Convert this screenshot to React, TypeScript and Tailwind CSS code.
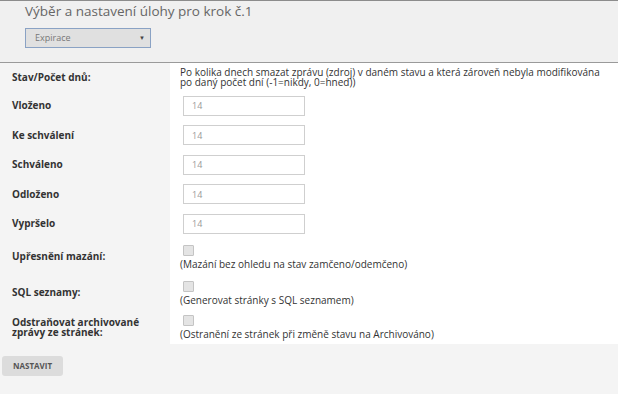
import { useState } from "react";

type Row = { label: string; value: string };

const STATES: Row[] = [
  { label: "Vloženo", value: "14" },
  { label: "Ke schválení", value: "14" },
  { label: "Schváleno", value: "14" },
  { label: "Odloženo", value: "14" },
  { label: "Vypršelo", value: "14" },
];

const OPTIONS = [
  { label: "Upřesnění mazání:", note: "(Mazání bez ohledu na stav zamčeno/odemčeno)" },
  { label: "SQL seznamy:", note: "(Generovat stránky s SQL seznamem)" },
  { label: "Odstraňovat archivované zprávy ze stránek:", note: "(Ostranění ze stránek při změně stavu na Archivováno)" },
];

export default function App() {
  const [values, setValues] = useState(STATES.map((s) => s.value));
  const [checks, setChecks] = useState(OPTIONS.map(() => false));

  return (
    <div className="w-[618px] h-[394px] bg-[#f4f4f4] font-['Open_Sans',sans-serif] text-[#333] overflow-hidden">
      <div className="h-[63px] bg-[#f0f0f0] border-t border-[#8c8c8c] border-b border-b-[#9a9a9a] pl-[25px]">
        <h1 className="text-[13.5px] leading-[18px] text-[#666] pt-[1px]">Výběr a nastavení úlohy pro krok č.1</h1>
        <div className="mt-[8px] w-[126px] h-[20px] bg-[#e0e0e0] border border-[#8aa2c4] flex items-center justify-between pl-[9px] pr-[5px]">
          <span className="text-[9px] text-[#777]">Expirace</span>
          <span className="text-[6px] text-[#444]">▼</span>
        </div>
      </div>

      <div className="flex">
        <div className="w-[170px] bg-[#f4f4f4] pl-[12px] text-[10px] font-bold text-[#333]">
          <div className="h-[28px] flex items-center">Stav/Počet dnů:</div>
          {STATES.map((s) => (
            <div key={s.label} className="h-[29.5px] flex items-center">{s.label}</div>
          ))}
          <div className="h-[36px] flex items-center">{OPTIONS[0].label}</div>
          <div className="h-[36px] flex items-center">{OPTIONS[1].label}</div>
          <div className="h-[33px] flex items-center leading-[10px] pr-[20px] pb-[1px]">{OPTIONS[2].label}</div>
        </div>

        <div className="flex-1 bg-white pl-[10px] pr-[12px] text-[10px]">
          <div className="h-[28px] leading-[9.5px] pt-[5px] max-w-[428px]">
            Po kolika dnech smazat zprávu (zdroj) v daném stavu a která zároveň nebyla modifikována po daný počet dní (-1=nikdy, 0=hned))
          </div>
          {STATES.map((s, i) => (
            <div key={s.label} className="h-[29.5px] flex items-center pl-[3px]">
              <input
                value={values[i]}
                onChange={(e) => setValues(values.map((v, j) => (j === i ? e.target.value : v)))}
                className="w-[122px] h-[20px] border border-[#cfcfcf] bg-white px-[8px] text-[9px] text-[#999] outline-none"
              />
            </div>
          ))}
          {OPTIONS.map((o, i) => (
            <div key={o.label} className={i === 2 ? "h-[33px] pt-[4px]" : "h-[36px] pt-[6px]"}>
              <button
                type="button"
                onClick={() => setChecks(checks.map((c, j) => (j === i ? !c : c)))}
                className={`block ml-[3px] w-[11px] h-[11px] rounded-[1px] border border-[#c4c4c4] ${checks[i] ? "bg-[#888]" : "bg-[#e4e4e4]"}`}
              />
              <div className="leading-[12px] mt-[2px]">{o.note}</div>
            </div>
          ))}
        </div>
      </div>

      <div className="pl-[2px] pt-[12px]">
        <button type="button" className="block w-[61px] h-[20px] rounded-[3px] bg-[#dcdcdc] text-[8px] font-bold text-[#555]">
          NASTAVIT
        </button>
      </div>
    </div>
  );
}
